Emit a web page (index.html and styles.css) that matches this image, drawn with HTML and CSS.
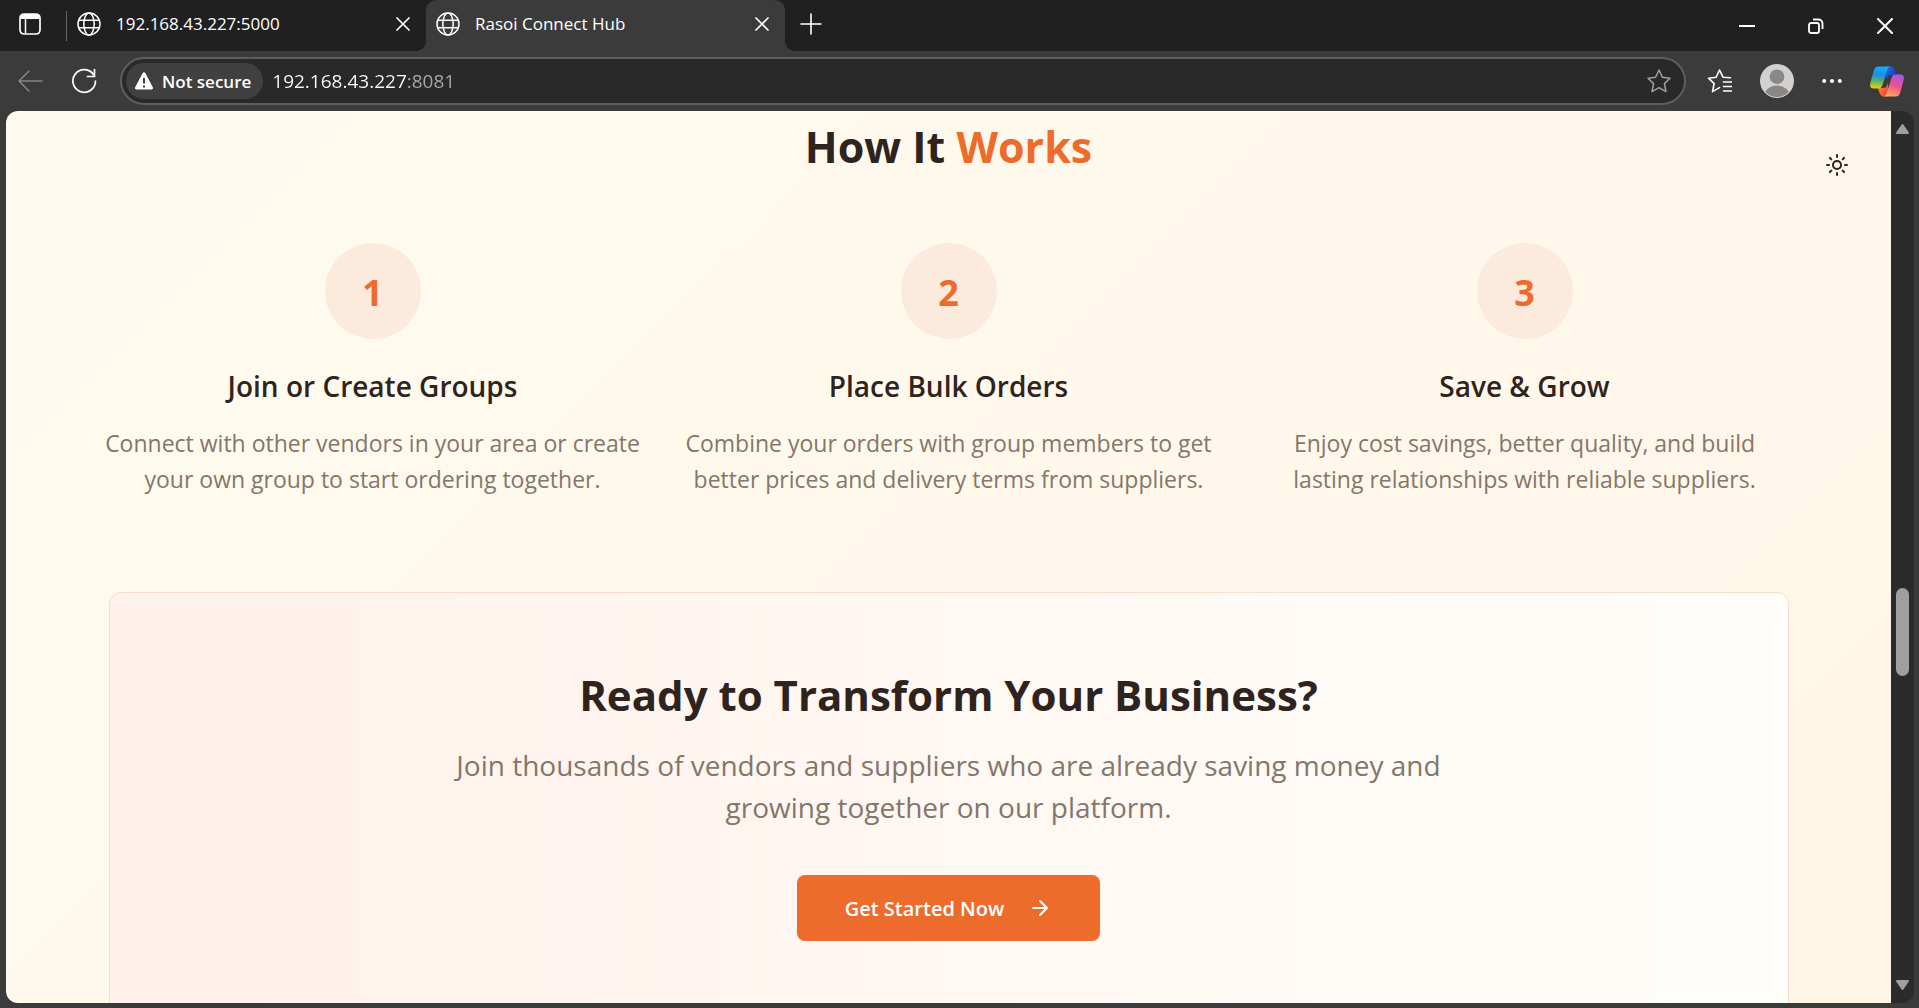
FILE: index.html
```html
<!DOCTYPE html>
<html lang="en">
<head>
<meta charset="utf-8">
<meta name="viewport" content="width=device-width, initial-scale=1">
<title>Rasoi Connect Hub</title>
<link rel="stylesheet" href="styles.css">
</head>
<body>
<svg class="defs" aria-hidden="true">
  <symbol id="globe" viewBox="0 0 24 24"><g fill="none" stroke="currentColor" stroke-width="1.5"><circle cx="12" cy="12" r="11"/><ellipse cx="12" cy="12" rx="5.2" ry="11"/><path d="M2 8.2h20M2 15.8h20"/></g></symbol>
  <symbol id="cross" viewBox="0 0 14 14"><path d="M1 1l12 12M13 1L1 13" fill="none" stroke="currentColor" stroke-width="1.7" stroke-linecap="round"/></symbol>
</svg>
<div class="browser">
  <header class="tabstrip">
    <button class="tab-actions" aria-label="Tab actions"><svg width="22" height="22" viewBox="0 0 22 22"><rect x="1" y="1" width="20" height="20" rx="4" fill="none" stroke="currentColor" stroke-width="1.7"/><path d="M1 6V5a4 4 0 0 1 4-4h12a4 4 0 0 1 4 4v1z" fill="currentColor"/><path d="M6.500 6v15" stroke="currentColor" stroke-width="1.5"/></svg></button>
    <span class="divider"></span>
    <div class="tab">
      <svg class="icon"><use href="#globe"/></svg>
      <span class="tab-title">192.168.43.227:5000</span>
      <button class="tab-close" aria-label="Close tab"><svg><use href="#cross"/></svg></button>
    </div>
    <div class="tab active">
      <svg class="icon"><use href="#globe"/></svg>
      <span class="tab-title">Rasoi Connect Hub</span>
      <button class="tab-close" aria-label="Close tab"><svg><use href="#cross"/></svg></button>
    </div>
    <button class="new-tab" aria-label="New tab"><svg width="22" height="22" viewBox="0 0 22 22"><path d="M11 1v20M1 11h20" stroke="currentColor" stroke-width="1.6" stroke-linecap="round"/></svg></button>
    <div class="window-controls">
      <button aria-label="Minimize"><svg width="16" height="16" viewBox="0 0 16 16"><path d="M0 8h16" stroke="currentColor" stroke-width="2"/></svg></button>
      <button aria-label="Restore"><svg width="16" height="16" viewBox="0 0 16 16"><g fill="none" stroke="currentColor" stroke-width="1.800"><rect x="1" y="5" width="10" height="10" rx="2"/><path d="M5 1.500h5.500a4 4 0 0 1 4 4V11"/></g></svg></button>
      <button aria-label="Close"><svg width="16" height="16" viewBox="0 0 16 16"><path d="M1 1l14 14M15 1L1 15" stroke="currentColor" stroke-width="2" stroke-linecap="round"/></svg></button>
    </div>
  </header>

  <div class="toolbar">
    <button class="back" aria-label="Back" disabled><svg width="26" height="24" viewBox="0 0 26 24"><path d="M25 12H2M12 2L2 12l10 10" fill="none" stroke="currentColor" stroke-width="1.500" stroke-linecap="round"/></svg></button>
    <button class="reload" aria-label="Refresh"><svg width="26" height="26" viewBox="0 0 26 26"><path d="M22.800 7A11.300 11.300 0 1 0 24.500 13M23.500 1.500v7h-7" fill="none" stroke="currentColor" stroke-width="1.700" stroke-linecap="round"/></svg></button>
    <div class="address">
      <button class="security"><svg width="20" height="18" viewBox="0 0 20 18"><path d="M8.600 1.200a1.600 1.600 0 0 1 2.800 0l7.400 14a1.500 1.500 0 0 1-1.300 2.300h-15a1.500 1.500 0 0 1-1.300-2.300z" fill="currentColor"/><path d="M10 6v5.500M10 13.500v2" stroke="#404040" stroke-width="2"/></svg>Not secure</button>
      <input class="url" type="text" aria-label="Address" value="192.168.43.227:8081" spellcheck="false">
      <button class="favorite" aria-label="Add to favorites"><svg width="26" height="26" viewBox="0 0 26 26"><path d="M13 2l3.400 7.300 7.600.9-5.600 5.400 1.600 8L13 19.700 6 23.600l1.600-8L2 10.200l7.600-.9z" fill="none" stroke="currentColor" stroke-width="1.500" stroke-linejoin="round"/></svg></button>
    </div>
    <div class="tools">
      <button aria-label="Favorites"><svg width="26" height="26" viewBox="0 0 26 26"><g fill="none" stroke="currentColor" stroke-width="1.600" stroke-linejoin="round" stroke-linecap="round"><path d="M24.500 9.700l-7.500-.5L13.500 2 10.100 9.300 2.500 10.200l5.600 5.400-1.600 8 7-4M17 10.500M17.500 14h8M17.500 18.500h8M17.500 23h8"/></g></svg></button>
      <button aria-label="Profile"><svg width="34" height="34" viewBox="0 0 34 34"><clipPath id="face"><circle cx="17" cy="17" r="16"/></clipPath><circle cx="17" cy="17" r="17" fill="#d2d0ce"/><g fill="#8a8886" clip-path="url(#face)"><circle cx="17" cy="12.700" r="7.300"/><ellipse cx="17" cy="32" rx="12.500" ry="10.500"/></g></svg></button>
      <button aria-label="Settings and more"><svg width="20" height="6" viewBox="0 0 20 6"><g fill="currentColor"><circle cx="2.200" cy="3" r="2"/><circle cx="10" cy="3" r="2"/><circle cx="17.800" cy="3" r="2"/></g></svg></button>
      <button aria-label="Copilot"><svg width="34" height="31" viewBox="0 0 34 31">
        <defs>
          <linearGradient id="cool" x1="0.300" y1="0" x2="0.200" y2="1"><stop offset="0" stop-color="#0fafff"/><stop offset=".35" stop-color="#1c8fe0"/><stop offset=".65" stop-color="#52b471"/><stop offset="1" stop-color="#f5d000"/></linearGradient>
          <linearGradient id="warm" x1="0.700" y1="0" x2="0.400" y2="1"><stop offset="0" stop-color="#a755f5"/><stop offset=".5" stop-color="#f0508c"/><stop offset="1" stop-color="#ffa75c"/></linearGradient>
          <linearGradient id="deep" x1="0" y1="0" x2="1" y2="1"><stop offset="0" stop-color="#2764e7"/><stop offset="1" stop-color="#1540c0"/></linearGradient>
          <linearGradient id="ember" x1="0" y1="0" x2="1" y2="1"><stop offset="0" stop-color="#ff9a2b"/><stop offset="1" stop-color="#f0353c"/></linearGradient>
        </defs>
        <path d="M16 .5h4c3 0 4 2 5 5l1 3.500h-5c-3 0-4 2-5 5z" fill="url(#deep)"/>
        <path d="M18 30.500h-4c-3 0-4-2-5-5L8 22h5c3 0 4-2 5-5z" fill="url(#ember)"/>
        <path d="M8.500.5H21c-2 0-3 1.500-3.700 3.500L12.500 19c-.8 2.500-2 3.500-4.500 3.500H4c-3.500 0-4.500-2-3.600-5.500L3.600 5C4.500 2 5.500.5 8.500.5z" fill="url(#cool)"/>
        <path d="M25.500 30.500H13c2 0 3-1.500 3.700-3.500L21.500 12c.8-2.500 2-3.500 4.500-3.500h4c3.500 0 4.500 2 3.600 5.500L30.400 26c-.9 3-1.900 4.500-4.900 4.500z" fill="url(#warm)"/>
      </svg></button>
    </div>
  </div>

  <div class="viewport">
    <main class="page">
      <section class="steps">
        <h2 class="headline">How It <span class="accent">Works</span></h2>
        <div class="step-grid">
          <article class="step">
            <div class="number">1</div>
            <h3>Join or Create Groups</h3>
            <p>Connect with other vendors in your area or create<br>your own group to start ordering together.</p>
          </article>
          <article class="step">
            <div class="number">2</div>
            <h3>Place Bulk Orders</h3>
            <p>Combine your orders with group members to get<br>better prices and delivery terms from suppliers.</p>
          </article>
          <article class="step">
            <div class="number">3</div>
            <h3>Save &amp; Grow</h3>
            <p>Enjoy cost savings, better quality, and build<br>lasting relationships with reliable suppliers.</p>
          </article>
        </div>
      </section>
      <section class="cta">
        <h2 class="headline">Ready to Transform Your Business?</h2>
        <p>Join thousands of vendors and suppliers who are already saving money and<br>growing together on our platform.</p>
        <a class="cta-button" href="#start">Get Started Now <svg width="24" height="24" viewBox="0 0 24 24"><path d="M5 12h14M12 5l7 7-7 7" fill="none" stroke="currentColor" stroke-width="2" stroke-linecap="round" stroke-linejoin="round"/></svg></a>
      </section>
      <button class="theme-toggle" aria-label="Toggle theme"><svg width="24" height="24" viewBox="0 0 24 24"><g fill="none" stroke="currentColor" stroke-width="2" stroke-linecap="round"><circle cx="12" cy="12" r="4"/><path d="M12 2v2M12 20v2M4.930 4.930l1.410 1.410M17.660 17.660l1.410 1.410M2 12h2M20 12h2M6.340 17.660l-1.410 1.410M19.070 4.930l-1.410 1.410"/></g></svg></button>
    </main>
    <div class="scrollbar">
      <svg width="15" height="11" viewBox="0 0 15 11"><path d="M2 10h11L7.500 2z" fill="#9f9f9f" stroke="#9f9f9f" stroke-width="2" stroke-linejoin="round"/></svg>
      <div class="track"><div class="thumb"></div></div>
      <svg width="15" height="11" viewBox="0 0 15 11"><path d="M2 1h11L7.500 9z" fill="#9f9f9f" stroke="#9f9f9f" stroke-width="2" stroke-linejoin="round"/></svg>
    </div>
  </div>
</div>
</body>
</html>
```
FILE: styles.css
```css
* { box-sizing: border-box; }

body {
  margin: 0;
  font-family: "Open Sans", "Noto Sans", sans-serif;
}

h2, h3, p { margin: 0; }

button {
  display: flex;
  align-items: center;
  justify-content: center;
  padding: 0;
  border: 0;
  background: none;
  color: inherit;
  font: inherit;
}

svg { display: block; flex: none; }

.defs { position: absolute; width: 0; height: 0; }

.browser {
  display: flex;
  flex-direction: column;
  height: 100vh;
  background: #3b3b3b;
  color: #fff;
}

/* Tab strip */
.tabstrip {
  display: flex;
  flex: none;
  height: 51px;
  background: #202020;
}

.tab-actions { width: 66px; padding: 0 6px 3px 0; }

.divider {
  width: 1px;
  height: 30px;
  margin-top: 11px;
  background: #666;
}

.tab {
  position: relative;
  display: flex;
  align-items: center;
  flex: 0 1 359px;
  gap: 15px;
  padding: 0 16px 3px 10px;
  font-size: 17px;
}

.tab.active {
  background: #3b3b3b;
  border-radius: 10px 10px 0 0;
}

.tab.active::before,
.tab.active::after {
  content: "";
  position: absolute;
  bottom: 0;
  width: 10px;
  height: 10px;
}

.tab.active::before {
  left: -10px;
  background: radial-gradient(circle at 0 0, #202020 10px, #3b3b3b 10px);
}

.tab.active::after {
  right: -10px;
  background: radial-gradient(circle at 100% 0, #202020 10px, #3b3b3b 10px);
}

.icon { width: 24px; height: 24px; }

.tab-title { flex: 1; padding-bottom: 2px; white-space: nowrap; }

.tab-close svg { width: 14px; height: 14px; }

.new-tab { width: 51px; padding-bottom: 4px; }

.window-controls { display: flex; margin-left: auto; }

.window-controls button { width: 69px; }

/* Toolbar */
.toolbar {
  display: flex;
  align-items: center;
  flex: none;
  height: 60px;
  padding: 0 15px 0 17px;
}

.back { color: #858585; }

.reload { margin-left: 28px; }

.address {
  display: flex;
  align-items: center;
  flex: 1;
  height: 48px;
  margin-left: 23px;
  padding: 0 12px 0 4px;
  border: 2px solid #5e5e5e;
  border-radius: 24px;
  background: #292929;
}

.security {
  gap: 8px;
  height: 36px;
  padding: 0 12px 0 8px;
  border-radius: 18px;
  background: #404040;
  font-size: 17px;
  font-weight: 600;
}

.url {
  flex: 1;
  min-width: 0;
  height: 40px;
  margin-left: 9px;
  padding: 0;
  border: 0;
  outline: 0;
  background: linear-gradient(90deg, #fff 136px, #aaa 136px) text;
  -webkit-background-clip: text;
  color: transparent;
  font: inherit;
  font-size: 19px;
}

.favorite { color: #a0a0a0; }

.tools {
  display: flex;
  align-items: center;
  gap: 28px;
  margin-left: 20px;
}

/* Web page */
.viewport {
  display: flex;
  flex: 1;
  min-height: 0;
  margin: 0 5px 5px 6px;
  border-radius: 12px;
  overflow: hidden;
}

.page {
  position: relative;
  flex: 1;
  padding: 8px 48px 0;
  overflow: hidden;
  background: linear-gradient(135deg, #fffbf0, #fff6e7);
  color: #2f241d;
  text-align: center;
}

.steps,
.cta {
  max-width: 1680px;
  margin: 0 auto;
}

.headline {
  font-size: 43px;
  line-height: 56px;
  font-weight: 700;
}

.accent { color: #ee6c2b; }

.step-grid {
  display: grid;
  grid-template-columns: repeat(3, minmax(0, 1fr));
  gap: 48px;
  margin-top: 68px;
}

.number {
  display: flex;
  align-items: center;
  justify-content: center;
  width: 96px;
  height: 96px;
  margin: 0 auto;
  padding-top: 3px;
  border-radius: 50%;
  background: #fcebdc;
  color: #ee6c2b;
  font-size: 36px;
  font-weight: 700;
}

.step h3 {
  margin-top: 28px;
  font-size: 28px;
  line-height: 38px;
  font-weight: 600;
}

.step p {
  margin: 20px -8px 0;
  color: #85766a;
  font-size: 23px;
  line-height: 36px;
}

.cta {
  margin-top: 95px;
  padding: 74px 48px 96px;
  border: 1px solid #f9dccd;
  border-radius: 12px;
  background: linear-gradient(90deg, #fff1eb, #fffefa);
}

.cta .headline { font-size: 42px; }

.cta p {
  margin-top: 21px;
  color: #85766a;
  font-size: 28px;
  line-height: 42px;
}

.cta-button {
  display: inline-flex;
  align-items: center;
  gap: 24px;
  height: 66px;
  margin-top: 47px;
  padding: 0 48px;
  border-radius: 8px;
  background: #ee6c2b;
  color: #fff;
  font-size: 20px;
  font-weight: 600;
  text-decoration: none;
}

.theme-toggle {
  position: absolute;
  top: 30px;
  right: 30px;
  width: 48px;
  height: 48px;
}

/* Scrollbar */
.scrollbar {
  display: flex;
  flex-direction: column;
  align-items: center;
  flex: none;
  width: 23px;
  padding: 12px 0;
  background: #2b2b2b;
}

.track {
  display: flex;
  flex-direction: column;
  flex: 1;
}

.track::before { content: ""; flex: 453; }

.track::after { content: ""; flex: 304; }

.thumb {
  flex: 88;
  width: 13px;
  border-radius: 7px;
  background: #9f9f9f;
}
```
